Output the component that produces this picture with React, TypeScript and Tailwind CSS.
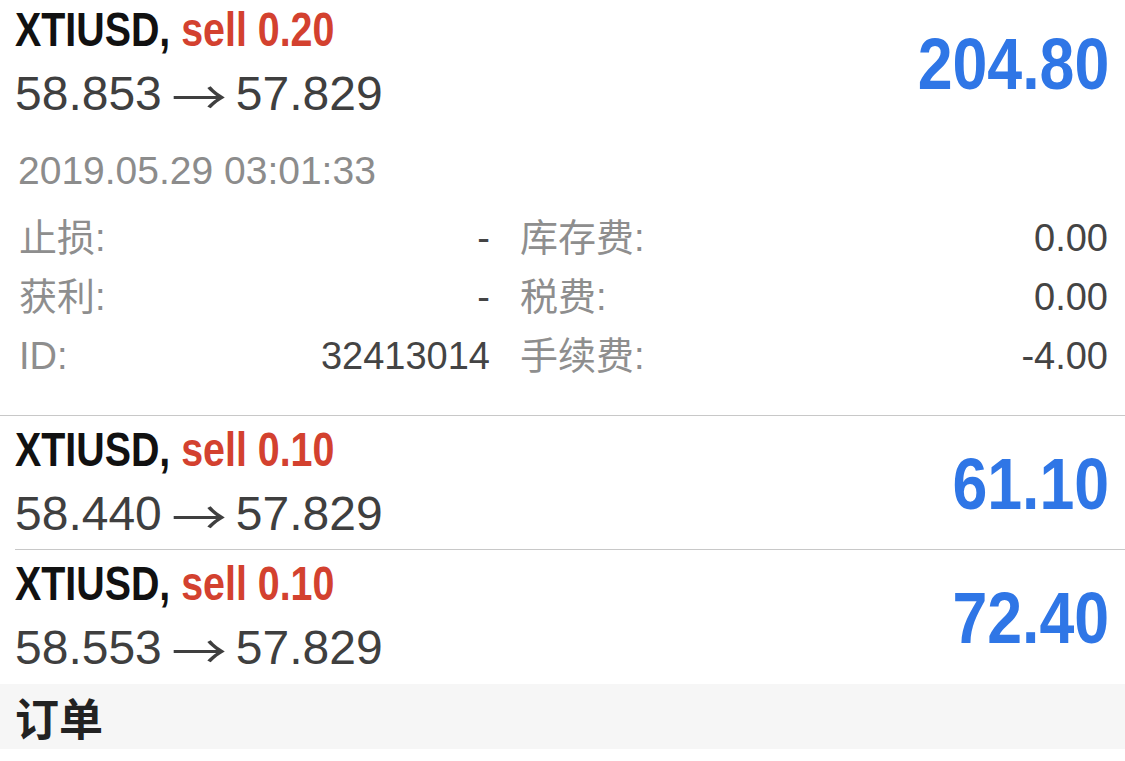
import React from "react";

type Position = {
  symbol: string;
  side: string;
  open: string;
  close: string;
  profit: string;
};

const bold = "font-['Liberation_Sans',Arial,sans-serif] font-bold";
const sans = "font-['Liberation_Sans','Noto_Sans_CJK_SC',sans-serif]";

const details = [
  { l: "止损:", lv: "-", r: "库存费:", rv: "0.00" },
  { l: "获利:", lv: "-", r: "税费:", rv: "0.00" },
  { l: "ID:", lv: "32413014", r: "手续费:", rv: "-4.00" },
];

const others: Position[] = [
  { symbol: "XTIUSD", side: "sell 0.10", open: "58.440", close: "57.829", profit: "61.10" },
  { symbol: "XTIUSD", side: "sell 0.10", open: "58.553", close: "57.829", profit: "72.40" },
];

function Head({ p }: { p: Position }) {
  return (
    <div className="flex items-center justify-between pl-[15px] pr-[16px]">
      <div className="flex flex-col">
        {/* condensed face isn't installed, so squeeze the bold one */}
        <div className={`${bold} flex h-[60px] items-center text-[48px] leading-none text-[#111]`}>
          <span className="inline-block origin-left scale-x-[0.82] whitespace-nowrap">
            {p.symbol}, <span className="text-[#d3412f]">{p.side}</span>
          </span>
        </div>
        <div className={`${sans} flex h-[68px] items-center whitespace-nowrap text-[48px] leading-none text-[#3f3f3f]`}>
          {p.open}
          <span className="mx-[14px] inline-block scale-x-[1.2] font-['Noto_Sans_CJK_SC',sans-serif] text-[46px]">→</span>
          {p.close}
        </div>
      </div>
      <div className={`${bold} origin-right scale-x-[0.87] text-[72px] leading-none text-[#2f76e6]`}>{p.profit}</div>
    </div>
  );
}

export default function App() {
  const first: Position = { symbol: "XTIUSD", side: "sell 0.20", open: "58.853", close: "57.829", profit: "204.80" };

  return (
    <div className="h-[761px] w-[1125px] overflow-hidden bg-white">
      {/* expanded position */}
      <div className="border-b border-[#c8c8c8] pb-[30px]">
        <Head p={first} />
        <div className={`${sans} mt-[12px] flex h-[60px] items-center pl-[18px] text-[39px] leading-none text-[#8c8c8c]`}>
          2019.05.29 03:01:33
        </div>
        <div className={`${sans} mt-[8px] grid grid-cols-[471px_1fr] gap-x-[30px] pl-[19px] pr-[17px] text-[38px] leading-none`}>
          {details.map((d) => (
            <React.Fragment key={d.l}>
              <div className="flex h-[59px] items-center justify-between">
                <span className="text-[#8e8e8e]">{d.l}</span>
                <span className="text-[#444]">{d.lv}</span>
              </div>
              <div className="flex h-[59px] items-center justify-between">
                <span className="text-[#8e8e8e]">{d.r}</span>
                <span className="text-[#444]">{d.rv}</span>
              </div>
            </React.Fragment>
          ))}
        </div>
      </div>

      {others.map((p, i) => (
        <div
          key={p.profit}
          className={`h-[134px] pt-[4px] ${i === 0 ? "ml-[15px] border-b border-[#c8c8c8]" : ""}`}
        >
          <div className={i === 0 ? "-ml-[15px]" : ""}>
            <Head p={p} />
          </div>
        </div>
      ))}

      <div className="flex h-[65px] items-center bg-[#f6f6f6] pl-[15px]">
        <span className="font-['Noto_Sans_CJK_SC',sans-serif] text-[44px] font-bold leading-none text-[#222]">订单</span>
      </div>
    </div>
  );
}
